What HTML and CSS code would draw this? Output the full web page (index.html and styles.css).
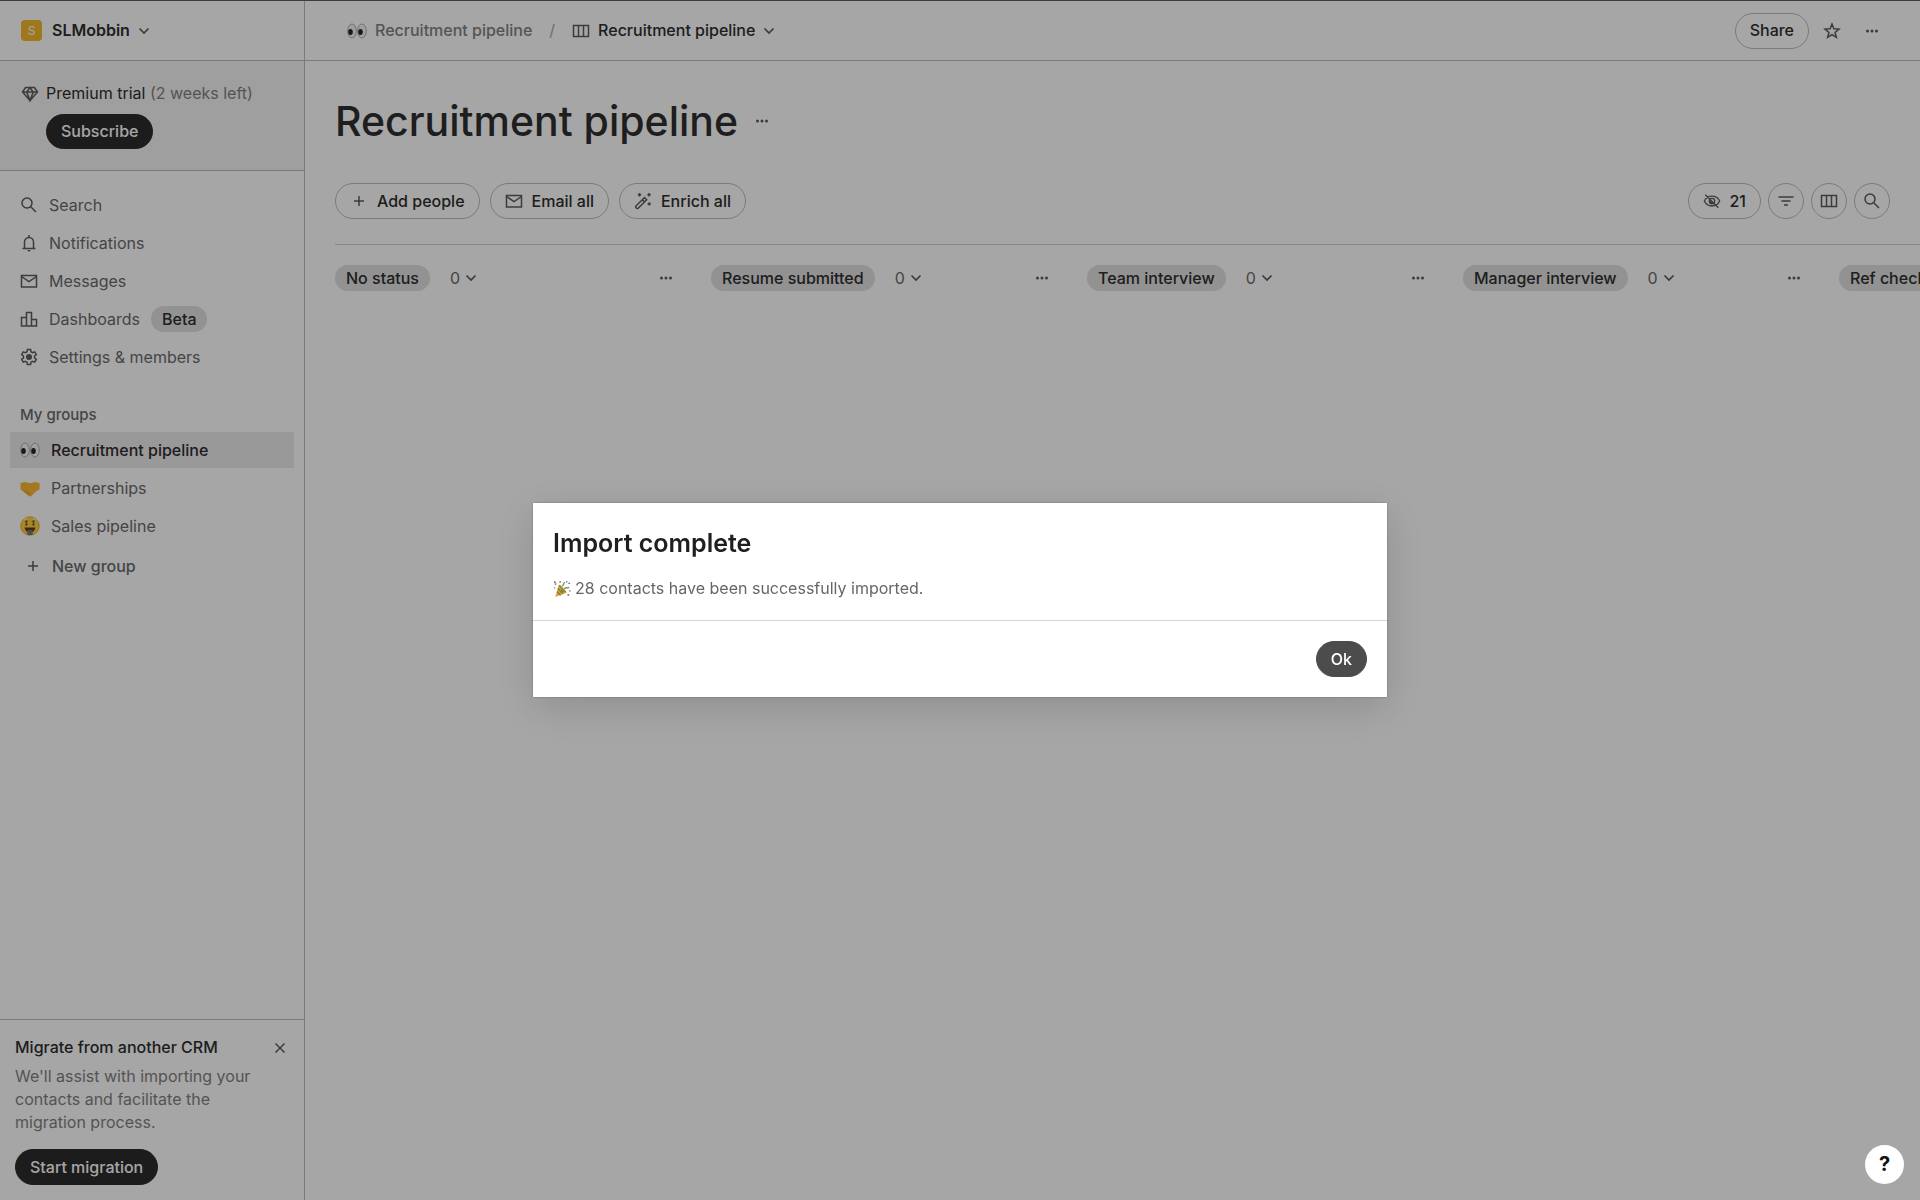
FILE: index.html
```html
<!DOCTYPE html>
<html lang="en">
<head>
  <meta charset="UTF-8">
  <meta name="viewport" content="width=device-width, initial-scale=1.0">
  <title>Recruitment pipeline</title>
  <link rel="stylesheet" href="styles.css">
</head>
<body>
  <!-- Icon sprite -->
  <svg class="sprite" aria-hidden="true">
    <symbol id="i-chevron" viewBox="0 0 12 12"><path d="M1.500 3.500 6 8l4.500-4.500"/></symbol>
    <symbol id="i-search" viewBox="0 0 18 18"><circle cx="7" cy="7" r="5"/><path d="m10.700 10.700 5.300 5.300"/></symbol>
    <symbol id="i-bell" viewBox="0 0 18 18"><path d="M2.500 14.500h13M4.500 14.500V8a4.500 4.500 0 0 1 9 0v6.500M9 3.500V1"/><path d="M7.500 16h3a1.500 1.500 0 0 1-3 0z" class="solid"/></symbol>
    <symbol id="i-mail" viewBox="0 0 18 18"><path d="M1.500 3.500h15v11.500h-15zM1.500 4.500 9 9.500l7.500-5"/></symbol>
    <symbol id="i-chart" viewBox="0 0 18 18"><path d="M1.500 7.500h5v8.500h-5zM6.500 2.500h5V16h-5zM11.500 9.500h5V16h-5z"/></symbol>
    <symbol id="i-gear" viewBox="0 0 18 18"><path d="M7.400 1.500h3.200l.4 2.300 1.500.9 2.200-.8 1.600 2.800-1.800 1.500v1.600l1.800 1.500-1.600 2.800-2.200-.8-1.500.9-.4 2.300H7.400L7 14.200l-1.500-.9-2.200.8-1.600-2.800 1.800-1.500V8.200L1.700 6.700l1.600-2.800 2.200.8L7 3.800z"/><circle cx="9" cy="9" r="3" class="dot"/></symbol>
    <symbol id="i-gem" viewBox="0 0 18 18"><path d="M4.500 2.500h9l3 4.500L9 15.500 1.500 7zM1.500 7h15M9 2.500 5.800 7 9 15.500 12.200 7z"/></symbol>
    <symbol id="i-plus" viewBox="0 0 18 18"><path d="M9 4v10M4 9h10"/></symbol>
    <symbol id="i-close" viewBox="0 0 18 18"><path d="m4.500 4.500 9 9M13.500 4.500l-9 9"/></symbol>
    <symbol id="i-board" viewBox="0 0 18 18"><path d="M1.500 3.500h15v11h-15zM6.500 3.500v11M11.500 3.500v11"/></symbol>
    <symbol id="i-wand" viewBox="0 0 18 18"><path d="m1.700 14.300 8.800-8.800 2.200 2.200-8.800 8.800c-.6.600-2.800-1.600-2.200-2.200zM8.300 7.700l2.200 2.200M5.500 1v3.400M3.800 2.700h3.400M15 1v3.400M13.300 2.700h3.400M15.200 10.200v3.400M13.500 11.900h3.400"/></symbol>
    <symbol id="i-hidden" viewBox="0 0 20 18"><path d="M1.500 9C3 5.700 6.200 3.500 10 3.500S17 5.700 18.500 9c-1.500 3.300-4.700 5.500-8.500 5.500S3 12.300 1.500 9zM2.500 2l14.500 14.500"/><circle cx="10" cy="9" r="3"/><path class="solid" d="m7.500 7.500 4 4-1.500.7L7 10z"/></symbol>
    <symbol id="i-filter" viewBox="0 0 18 18"><path d="M1.500 5h15M4.500 9h9M7 13h4"/></symbol>
    <symbol id="i-star" viewBox="0 0 18 18"><path d="m9 2 1.900 4.800 5.100.3-4 3.300 1.400 5L9 12.600l-4.400 2.800 1.400-5-4-3.300 5.100-.3z"/></symbol>
    <symbol id="i-dots" viewBox="0 0 18 18"><circle cx="4.500" cy="9" r="1.500" class="dot"/><circle cx="9" cy="9" r="1.500" class="dot"/><circle cx="13.500" cy="9" r="1.500" class="dot"/></symbol>
    <symbol id="e-eyes" viewBox="0 0 20 20">
      <g stroke="#9a9a9a" stroke-width=".8" fill="#f5f5f5"><ellipse cx="5" cy="10" rx="4.300" ry="7"/><ellipse cx="15" cy="10" rx="4.300" ry="7"/></g>
      <g fill="#2b2624" stroke="none"><ellipse cx="3.500" cy="11" rx="2.300" ry="3"/><ellipse cx="13.500" cy="11" rx="2.300" ry="3"/></g>
    </symbol>
    <symbol id="e-hands" viewBox="0 0 20 20">
      <path fill="#fab833" stroke="none" d="M.5 5 5 4l5 1.200L15 4l4.500 1v6.500L16 13.500l-4.500 4.300c-1 .8-2.200.8-3.200 0L4 14 .5 11.500z"/>
      <path fill="none" stroke="#bd7d1c" stroke-width=".7" d="m3.500 12 2 2.200m.5-1 2 2.500m.2-1.400 2 2.500"/>
    </symbol>
    <symbol id="e-money" viewBox="0 0 20 20">
      <circle cx="10" cy="10" r="9.300" fill="#ffd13e" stroke="#e19b21" stroke-width=".7"/>
      <path fill="#6b381e" stroke="none" d="M4.500 11.500h11c-.5 3-2.500 5-5.500 5s-5-2-5.500-5z"/>
      <path fill="#67806c" stroke="none" d="M7.300 14h5.400v5H7.300z"/>
      <path fill="none" stroke="#7c612b" stroke-width=".9" d="M8 5.500c-3-1.500-3.700.8-1.700 1.400s1.600 2.700-1.300 1.700M6.500 4v6M15 5.500c-3-1.500-3.700.8-1.700 1.400s1.600 2.700-1.300 1.700M13.500 4v6"/>
      <path fill="none" stroke="#fff" stroke-width=".9" d="M4 3.700c1-.9 2-1 3-.4M13 3.300c1-.6 2-.5 3 .4"/>
    </symbol>
    <symbol id="e-party" viewBox="0 0 20 20">
      <path fill="#d9a43b" stroke="none" d="m2.500 19 4-14 9 9z"/>
      <path fill="none" stroke="#7c8d35" stroke-width="1.800" d="m7 6 7 7.500M5.500 9.500l5.500 6"/>
      <path fill="none" stroke="#a05b3a" stroke-width="1.200" d="m4.500 13 4 4M9 11l2.500 2.500"/>
      <path fill="none" stroke="#778c62" stroke-width="1.400" d="M10 7c2.500-1.200 1-3 3-4.500M12.500 10c1.500-3 3.500 0 5.500-2M2 5l2-1"/>
      <g stroke="none"><path fill="#8b7297" d="M1 1.500h2v2H1zM17 3h2v1.500h-2zM16 15.500h2v2h-2z"/><path fill="#c4826e" d="M7 1h2v2H7zM18 11h1.500v2H18z"/><path fill="#6f93a6" d="M14.500 1h1.500v2h-1.500zM1 8h1.500v1.500H1z"/></g>
    </symbol>
  </svg>

  <div class="app">
    <aside class="sidebar">
      <button class="workspace">
        <span class="workspace-logo">S</span>
        <span class="workspace-name">SLMobbin</span>
        <svg class="chevron"><use href="#i-chevron"/></svg>
      </button>

      <div class="trial">
        <div class="trial-text">
          <svg class="icon"><use href="#i-gem"/></svg>
          <span>Premium trial <span class="muted">(2 weeks left)</span></span>
        </div>
        <button class="btn btn-dark">Subscribe</button>
      </div>

      <nav class="nav">
        <a href="#"><svg class="icon"><use href="#i-search"/></svg>Search</a>
        <a href="#"><svg class="icon"><use href="#i-bell"/></svg>Notifications</a>
        <a href="#"><svg class="icon"><use href="#i-mail"/></svg>Messages</a>
        <a href="#"><svg class="icon"><use href="#i-chart"/></svg>Dashboards <span class="tag">Beta</span></a>
        <a href="#"><svg class="icon"><use href="#i-gear"/></svg>Settings &amp; members</a>
      </nav>

      <h2 class="groups-title">My groups</h2>
      <nav class="nav groups">
        <a href="#" class="active"><svg class="emoji"><use href="#e-eyes"/></svg>Recruitment pipeline</a>
        <a href="#"><svg class="emoji"><use href="#e-hands"/></svg>Partnerships</a>
        <a href="#"><svg class="emoji"><use href="#e-money"/></svg>Sales pipeline</a>
      </nav>
      <button class="new-group"><svg class="icon"><use href="#i-plus"/></svg>New group</button>

      <section class="migrate">
        <div class="migrate-head">
          <h2>Migrate from another CRM</h2>
          <button class="icon-btn" aria-label="Close"><svg class="icon"><use href="#i-close"/></svg></button>
        </div>
        <p>We'll assist with importing your contacts and facilitate the migration process.</p>
        <button class="btn btn-dark">Start migration</button>
      </section>
    </aside>

    <main class="main">
      <header class="topbar">
        <div class="breadcrumb">
          <a href="#"><svg class="emoji"><use href="#e-eyes"/></svg>Recruitment pipeline</a>
          <span class="slash">/</span>
          <button class="view-btn">
            <svg class="icon"><use href="#i-board"/></svg>Recruitment pipeline
            <svg class="chevron"><use href="#i-chevron"/></svg>
          </button>
        </div>
        <div class="topbar-actions">
          <button class="btn">Share</button>
          <button class="icon-btn" aria-label="Favorite"><svg class="icon"><use href="#i-star"/></svg></button>
          <button class="icon-btn" aria-label="More"><svg class="icon"><use href="#i-dots"/></svg></button>
        </div>
      </header>

      <div class="content">
        <div class="title-row">
          <h1>Recruitment pipeline</h1>
          <button class="icon-btn" aria-label="Group options"><svg class="icon"><use href="#i-dots"/></svg></button>
        </div>

        <div class="toolbar">
          <div class="tools">
            <button class="btn"><svg class="icon"><use href="#i-plus"/></svg>Add people</button>
            <button class="btn"><svg class="icon"><use href="#i-mail"/></svg>Email all</button>
            <button class="btn"><svg class="icon"><use href="#i-wand"/></svg>Enrich all</button>
          </div>
          <div class="filters">
            <button class="btn"><svg class="icon"><use href="#i-hidden"/></svg>21</button>
            <button class="btn btn-round" aria-label="Filter"><svg class="icon"><use href="#i-filter"/></svg></button>
            <button class="btn btn-round" aria-label="Columns"><svg class="icon"><use href="#i-board"/></svg></button>
            <button class="btn btn-round" aria-label="Search"><svg class="icon"><use href="#i-search"/></svg></button>
          </div>
        </div>
      </div>

      <div class="board">
        <div class="column">
          <span class="tag">No status</span>
          <button class="count">0 <svg class="chevron"><use href="#i-chevron"/></svg></button>
          <button class="icon-btn" aria-label="Column options"><svg class="icon"><use href="#i-dots"/></svg></button>
        </div>
        <div class="column">
          <span class="tag">Resume submitted</span>
          <button class="count">0 <svg class="chevron"><use href="#i-chevron"/></svg></button>
          <button class="icon-btn" aria-label="Column options"><svg class="icon"><use href="#i-dots"/></svg></button>
        </div>
        <div class="column">
          <span class="tag">Team interview</span>
          <button class="count">0 <svg class="chevron"><use href="#i-chevron"/></svg></button>
          <button class="icon-btn" aria-label="Column options"><svg class="icon"><use href="#i-dots"/></svg></button>
        </div>
        <div class="column">
          <span class="tag">Manager interview</span>
          <button class="count">0 <svg class="chevron"><use href="#i-chevron"/></svg></button>
          <button class="icon-btn" aria-label="Column options"><svg class="icon"><use href="#i-dots"/></svg></button>
        </div>
        <div class="column">
          <span class="tag">Ref check</span>
        </div>
      </div>
    </main>
  </div>

  <div class="overlay">
    <div class="modal" role="dialog" aria-labelledby="modal-title">
      <div class="modal-body">
        <h2 id="modal-title">Import complete</h2>
        <p><svg class="emoji"><use href="#e-party"/></svg>28 contacts have been successfully imported.</p>
      </div>
      <div class="modal-footer">
        <button class="btn btn-ok">Ok</button>
      </div>
    </div>
  </div>

  <button class="help">?</button>
</body>
</html>
```
FILE: styles.css
```css
* {
  box-sizing: border-box;
}
body {
  margin: 0;
  font-family: Inter, "Liberation Sans", sans-serif;
  font-size: 16px;
  line-height: 23px;
  color: #2e2e2e;
  background: #fff;
}
h1, h2, p {
  margin: 0;
}
a {
  color: inherit;
  text-decoration: none;
}
button {
  font: inherit;
  color: inherit;
  background: none;
  border: 0;
  padding: 0;
  cursor: pointer;
}
.sprite {
  display: none;
}
.icon, .chevron {
  width: 18px;
  height: 18px;
  flex-shrink: 0;
  fill: none;
  stroke: #5c5c5c;
  stroke-width: 1.5;
}
.chevron {
  width: 12px;
  height: 12px;
  stroke-width: 1.7;
}
.dot, .solid {
  fill: #5c5c5c;
  stroke: none;
}
.emoji {
  width: 20px;
  height: 20px;
  flex-shrink: 0;
}
.muted {
  color: #828282;
}
.app {
  display: flex;
  height: 100vh;
  border-top: 1px solid #5f5f5f;
}

/* Buttons */
.btn {
  display: flex;
  align-items: center;
  gap: 9px;
  height: 36px;
  padding: 0 14px;
  border: 1px solid #bcbcbc;
  border-radius: 18px;
  font-weight: 500;
}
.btn-dark {
  background: #2c2c2c;
  border-color: #2c2c2c;
  color: #fff;
}
.btn-round {
  width: 36px;
  padding: 0;
  justify-content: center;
}
.icon-btn {
  display: flex;
}
.tag {
  height: 26px;
  padding: 0 11px;
  border-radius: 13px;
  background: #e0e0e0;
  color: #2e2e2e;
  font-weight: 500;
  line-height: 26px;
  white-space: nowrap;
}

/* Sidebar */
.sidebar {
  display: flex;
  flex-direction: column;
  width: 305px;
  flex-shrink: 0;
  border-right: 1px solid #bcbcbc;
}
.workspace {
  display: flex;
  align-items: center;
  height: 60px;
  padding: 0 21px;
  border-bottom: 1px solid #bcbcbc;
}
.workspace-logo {
  width: 21px;
  height: 21px;
  border-radius: 4px;
  background: #f5b92f;
  color: #fff;
  font-size: 12px;
  line-height: 21px;
}
.workspace-name {
  margin: 0 8px 0 10px;
  font-weight: 600;
}
.trial {
  display: flex;
  flex-direction: column;
  align-items: flex-start;
  gap: 9px;
  height: 110px;
  padding: 21px;
  background: #f4f4f4;
  border-bottom: 1px solid #bcbcbc;
}
.trial-text {
  display: flex;
  align-items: center;
  gap: 7px;
}
.trial .btn {
  margin-left: 25px;
}
.nav {
  display: flex;
  flex-direction: column;
  gap: 2px;
  padding: 16px 10px 0;
}
.nav a {
  display: flex;
  align-items: center;
  gap: 11px;
  height: 36px;
  padding: 0 10px;
  color: #6b6b6b;
}
.groups-title {
  padding: 28px 20px 0;
  font-size: 15px;
  font-weight: 500;
  color: #6b6b6b;
}
.groups {
  padding-top: 6px;
}
.groups a.active {
  background: #ebebeb;
  color: #2e2e2e;
  font-weight: 500;
}
.new-group {
  display: flex;
  align-items: center;
  gap: 10px;
  height: 36px;
  margin-top: 4px;
  padding: 0 24px;
  color: #6b6b6b;
  font-weight: 500;
}
.migrate {
  margin-top: auto;
  padding: 16px 15px 15px;
  border-top: 1px solid #bcbcbc;
}
.migrate-head {
  display: flex;
  align-items: center;
  justify-content: space-between;
  margin-bottom: 6px;
}
.migrate-head h2 {
  font-size: 16px;
  font-weight: 500;
}
.migrate p {
  margin-bottom: 15px;
  padding-right: 20px;
  color: #828282;
}

/* Main area */
.main {
  flex: 1;
  min-width: 0;
  overflow: hidden;
}
.topbar {
  display: flex;
  align-items: center;
  justify-content: space-between;
  height: 60px;
  padding: 0 39px 0 42px;
  border-bottom: 1px solid #bcbcbc;
}
.breadcrumb, .breadcrumb a, .view-btn, .topbar-actions {
  display: flex;
  align-items: center;
}
.breadcrumb {
  gap: 17px;
}
.breadcrumb a {
  gap: 8px;
  color: #828282;
  font-weight: 500;
}
.slash {
  color: #a8a8a8;
}
.view-btn {
  gap: 8px;
  font-weight: 500;
}
.topbar-actions {
  gap: 14px;
}
.topbar-actions .icon-btn + .icon-btn {
  margin-left: 8px;
}
.content {
  margin-left: 30px;
  padding-right: 30px;
  border-bottom: 1px solid #d0d0d0;
}
.title-row {
  display: flex;
  align-items: center;
  gap: 15px;
  padding-top: 34px;
}
h1 {
  font-size: 41px;
  line-height: 52px;
  font-weight: 500;
}
.toolbar {
  display: flex;
  justify-content: space-between;
  padding: 36px 0 25px;
}
.tools, .filters {
  display: flex;
  gap: 10px;
}
.filters {
  gap: 7px;
}
.board {
  display: flex;
  gap: 36px;
  padding: 20px 0 0 30px;
}
.column {
  display: flex;
  align-items: center;
  width: 340px;
  flex-shrink: 0;
}
.column .icon-btn {
  margin-left: auto;
}
.count {
  display: flex;
  align-items: center;
  gap: 5px;
  margin-left: 20px;
  color: #6b6b6b;
}

/* Import dialog */
.overlay {
  position: fixed;
  inset: 0;
  display: flex;
  align-items: center;
  justify-content: center;
  background: rgba(0, 0, 0, 0.35);
}
.modal {
  width: 854px;
  background: #fff;
  box-shadow: 0 0 2px rgba(0, 0, 0, 0.3), 0 10px 40px rgba(0, 0, 0, 0.15);
}
.modal-body {
  padding: 24px 20px 20px;
}
.modal h2 {
  font-size: 25px;
  line-height: 32px;
  font-weight: 600;
  color: #1f1f1f;
}
.modal p {
  display: flex;
  align-items: center;
  gap: 4px;
  margin-top: 18px;
  color: #666;
}
.modal .emoji {
  width: 18px;
  height: 18px;
}
.modal-footer {
  display: flex;
  justify-content: flex-end;
  padding: 20px;
  border-top: 1px solid #d6d6d6;
}
.btn-ok {
  background: #4c4c4c;
  border-color: #4c4c4c;
  color: #fff;
}
.help {
  position: fixed;
  right: 16px;
  bottom: 16px;
  width: 39px;
  height: 39px;
  border-radius: 50%;
  background: #fff;
  color: #111;
  font-size: 20px;
  font-weight: 700;
}
```
